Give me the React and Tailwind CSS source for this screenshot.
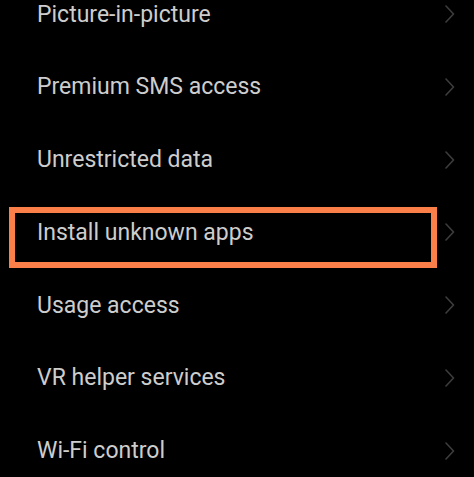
const items = [
  "Picture-in-picture",
  "Premium SMS access",
  "Unrestricted data",
  "Install unknown apps",
  "Usage access",
  "VR helper services",
  "Wi-Fi control",
];

function Chevron() {
  return (
    <svg width="10" height="18" viewBox="0 0 10 18" fill="none" className="mr-[19px]">
      <polyline points="1,1 8.5,9 1,17" stroke="#3d3d3d" strokeWidth="1.6" strokeLinecap="round" strokeLinejoin="round" />
    </svg>
  );
}

function Row({ label, highlighted }) {
  return (
    <div className="relative flex h-[72.8px] items-center justify-between pl-[37px]">
      <span
        className="text-[23px] leading-none text-[#cdcdcd]"
        style={{ fontFamily: "Roboto, 'Liberation Sans', sans-serif" }}
      >
        {label}
      </span>
      <Chevron />
      {highlighted && (
        <div className="absolute left-[9px] top-[11px] h-[61px] w-[428px] border-[6px] border-[#fb7f49]" />
      )}
    </div>
  );
}

export default function App() {
  return (
    <div className="h-[477px] w-[474px] overflow-hidden bg-black">
      <div className="-mt-[22.4px]">
        {items.map((label, i) => (
          <Row key={label} label={label} highlighted={i === 3} />
        ))}
      </div>
    </div>
  );
}
